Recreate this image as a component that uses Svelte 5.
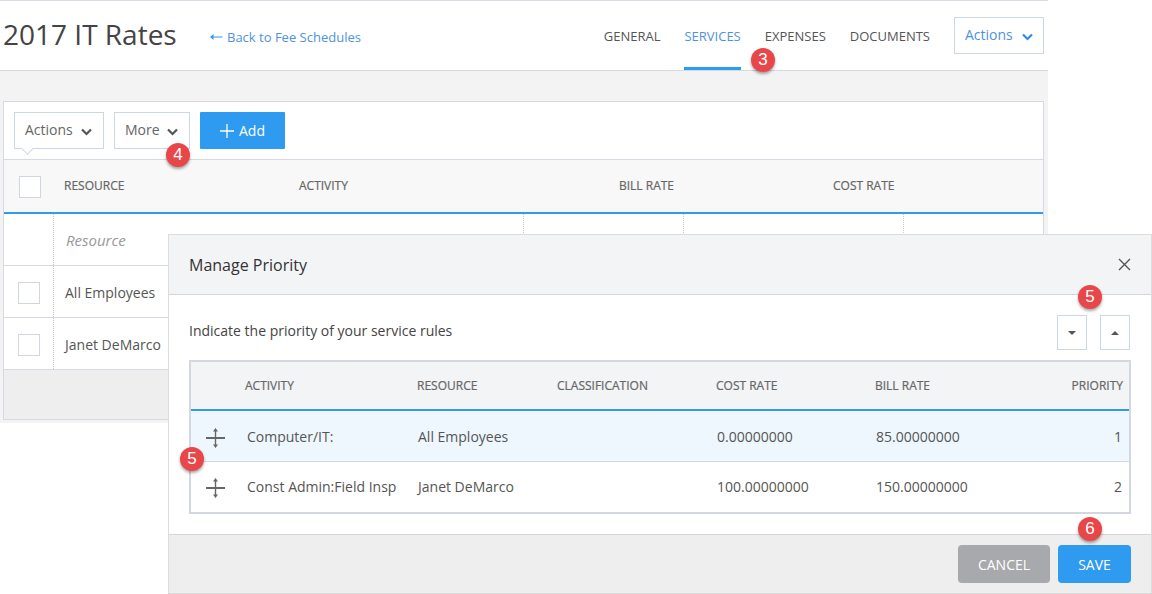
<script>
const baseRows = ['All Employees', 'Janet DeMarco']

const priorityRows = [
	{ activity: 'Computer/IT:', resource: 'All Employees', cost: '0.00000000', bill: '85.00000000', priority: 1, active: true },
	{ activity: 'Const Admin:Field Insp', resource: 'Janet DeMarco', cost: '100.00000000', bill: '150.00000000', priority: 2, active: false }
]
</script>

<div class="page">
	<div class="shell">
		<header class="top">
			<h1>2017 IT Rates</h1>
			<a class="back" href="#back">
				<svg width="13" height="8" viewBox="0 0 13 8"><path d="M0 4l3.500-3v2.400h9v1.200h-9V7z" fill="#2e9bf0"/></svg>
				Back to Fee Schedules
			</a>
			<nav class="tabs">
				<span>GENERAL</span>
				<span class="on">SERVICES</span>
				<span>EXPENSES</span>
				<span>DOCUMENTS</span>
			</nav>
			<button class="outline blue">Actions
				<svg class="chev" width="11" height="8" viewBox="0 0 11 8"><path d="M1 1.500l4.500 4.500 4.500-4.500" fill="none" stroke="currentColor" stroke-width="2.200"/></svg>
			</button>
		</header>

		<div class="content">
			<section class="panel">
				<div class="toolbar">
					<button class="outline act">Actions
						<svg class="chev" width="11" height="8" viewBox="0 0 11 8"><path d="M1 1.500l4.500 4.500 4.500-4.500" fill="none" stroke="currentColor" stroke-width="2.200"/></svg>
						<i class="tip"></i>
					</button>
					<button class="outline more">More
						<svg class="chev" width="11" height="8" viewBox="0 0 11 8"><path d="M1 1.500l4.500 4.500 4.500-4.500" fill="none" stroke="currentColor" stroke-width="2.200"/></svg>
					</button>
					<button class="add">
						<svg width="14" height="14" viewBox="0 0 14 14"><path d="M7 0v14M0 7h14" stroke="#fff" stroke-width="1.300"/></svg>
						Add
					</button>
				</div>

				<div class="row head">
					<div class="c-check"><span class="box"></span></div>
					<div>RESOURCE</div>
					<div>ACTIVITY</div>
					<div>BILL RATE</div>
					<div>COST RATE</div>
				</div>

				<div class="row body filter">
					<div class="c-check"></div>
					<div class="placeholder">Resource</div>
					<div></div>
					<div></div>
					<div></div>
				</div>

				{#each baseRows as name}
					<div class="row body">
						<div class="c-check"><span class="box"></span></div>
						<div>{name}</div>
						<div></div>
						<div></div>
						<div></div>
					</div>
				{/each}

				<div class="panel-foot"></div>
			</section>
		</div>
	</div>

	<section class="modal">
		<div class="modal-head">
			<h2>Manage Priority</h2>
			<svg width="13" height="13" viewBox="0 0 13 13"><path d="M1 1l11 11M12 1L1 12" stroke="#555" stroke-width="1.400" fill="none"/></svg>
		</div>

		<div class="modal-body">
			<div class="intro">
				<p>Indicate the priority of your service rules</p>
				<button class="sort" aria-label="Move down"><i class="down"></i></button>
				<button class="sort" aria-label="Move up"><i class="up"></i></button>
			</div>

			<div class="ptable">
				<div class="prow phead">
					<div></div>
					<div>ACTIVITY</div>
					<div>RESOURCE</div>
					<div>CLASSIFICATION</div>
					<div>COST RATE</div>
					<div>BILL RATE</div>
					<div class="right">PRIORITY</div>
				</div>
				{#each priorityRows as r}
					<div class="prow pbody" class:active={r.active}>
						<div class="grip">
							<svg width="19" height="20" viewBox="0 0 19 20">
								<path d="M0 10h19" stroke="#666" stroke-width="2" fill="none"/>
								<path d="M9.500 2v16" stroke="#666" stroke-width="1.400" fill="none"/>
								<path d="M9.500 0l2.500 3.500h-5zM9.500 20l2.500-3.500h-5z" fill="#666"/>
							</svg>
						</div>
						<div>{r.activity}</div>
						<div>{r.resource}</div>
						<div></div>
						<div>{r.cost}</div>
						<div>{r.bill}</div>
						<div class="right">{r.priority}</div>
					</div>
				{/each}
			</div>
		</div>

		<div class="modal-foot">
			<button class="cancel">CANCEL</button>
			<button class="save">SAVE</button>
		</div>
	</section>

	<span class="badge" style="left:751px;top:48px">3</span>
	<span class="badge" style="left:166px;top:143px">4</span>
	<span class="badge" style="left:1078px;top:285px">5</span>
	<span class="badge" style="left:180px;top:447px">5</span>
	<span class="badge" style="left:1078px;top:517px">6</span>
</div>

<style>
:global(body) {
	margin: 0;
	background: #fff;
}

.page {
	position: relative;
	width: 1152px;
	height: 594px;
	overflow: hidden;
	font-family: "Open Sans", sans-serif;
	font-size: 14px;
	color: #555;
}

.shell {
	width: 1048px;
}

button {
	font-family: inherit;
	cursor: pointer;
}

.top {
	display: flex;
	align-items: center;
	box-sizing: border-box;
	height: 71px;
	border-top: 1px solid #d8dde5;
	border-bottom: 1px solid #d5d9e2;
	padding-left: 3px;
	padding-right: 4px;
}

h1 {
	margin: -4px 0 0;
	font-size: 28px;
	font-weight: 400;
	color: #444;
	line-height: 1;
	width: 207px;
}

.back {
	display: flex;
	align-items: center;
	gap: 4px;
	padding-top: 2px;
	font-size: 13px;
	color: #4e92df;
	text-decoration: none;
}

.tabs {
	display: flex;
	gap: 24px;
	margin-left: auto;
	margin-right: 24px;
	align-self: stretch;
	font-size: 13px;
	color: #555;
}

.tabs span {
	display: flex;
	align-items: center;
	padding-top: 3px;
	box-sizing: border-box;
	height: 69px;
	border-bottom: 3px solid transparent;
}

.tabs .on {
	color: #4e92df;
	border-bottom-color: #2e9bf0;
}

.outline {
	display: flex;
	align-items: center;
	justify-content: space-between;
	height: 37px;
	padding: 0 11px 2px 10px;
	box-sizing: border-box;
	background: #fff;
	border: 1px solid #cbd8e2;
	font-size: 14px;
	color: #666;
	position: relative;
}

.outline.blue {
	width: 90px;
	height: 37px;
	padding-right: 10px;
	color: #4e92df;
}

.outline .chev {
	margin-top: 4px;
}

.blue .chev {
	color: #2e8fe0;
}

.act .chev, .more .chev {
	color: #555;
}

.content {
	background: #f3f3f3;
	height: 352px;
	padding: 30px 4px 0 3px;
	box-sizing: border-box;
}

.panel {
	border: 1px solid #d5d9e2;
	background: #fff;
}

.toolbar {
	display: flex;
	gap: 10px;
	height: 58px;
	padding: 10px 10px 0;
	box-sizing: border-box;
	border-bottom: 1px solid #d5d9e2;
}

.act {
	width: 90px;
}

.more {
	width: 76px;
}

.tip {
	position: absolute;
	left: 8px;
	bottom: -5px;
	width: 8px;
	height: 8px;
	background: #fff;
	border-right: 1px solid #cbd8e2;
	border-bottom: 1px solid #cbd8e2;
	transform: rotate(45deg);
}

.add {
	display: flex;
	align-items: center;
	justify-content: center;
	gap: 5px;
	width: 85px;
	height: 37px;
	background: #2e9bf0;
	color: #fff;
	border: 0;
	border-radius: 1px;
	font-size: 14px;
}

.row {
	display: grid;
}

.row > div {
	display: flex;
	align-items: center;
}

.head {
	height: 54px;
	background: #f8f8f8;
	border-bottom: 2px solid #2e9bf0;
	box-sizing: border-box;
	font-size: 12px;
	color: #666;
	-webkit-text-stroke: 0.2px #666;
	grid-template-columns: 60px 235px 320px 214px 1fr;
	padding-bottom: 1px;
}

.head > .c-check {
	padding: 3px 0 0 15px;
}

.body {
	height: 52px;
	box-sizing: border-box;
	border-bottom: 1px solid #d5d9e2;
	font-size: 14px;
	color: #555;
	grid-template-columns: 50px 470px 160px 220px 1fr;
}

.body > div {
	border-right: 1px dotted #c9c9c9;
	padding-left: 11px;
	padding-top: 1px;
}

.body > div:last-child {
	border-right: 0;
}

.body > .c-check {
	padding-left: 14px;
	padding-top: 3px;
}

.body > .placeholder {
	padding-left: 12px;
	font-size: 15px;
	font-style: italic;
	color: #999;
}

.box {
	display: block;
	width: 20px;
	height: 20px;
	border: 1px solid #cfd6e0;
	background: #fff;
}

.panel-foot {
	height: 49px;
	background: #eee;
}

.modal {
	position: absolute;
	left: 168px;
	top: 234px;
	width: 984px;
	height: 360px;
	box-sizing: border-box;
	display: flex;
	flex-direction: column;
	background: #fff;
	border: 1px solid #dcdcdc;
}

.modal-head {
	display: flex;
	align-items: center;
	justify-content: space-between;
	height: 60px;
	flex: none;
	box-sizing: border-box;
	padding: 0 20px;
	background: #f3f4f6;
	border-bottom: 1px solid #d5d5d5;
}

h2 {
	margin: 0;
	font-size: 16px;
	font-weight: 400;
	color: #333;
}

.modal-body {
	flex: 1;
	padding: 20px 20px 0 21px;
}

.intro {
	display: flex;
	align-items: center;
	gap: 13px;
	height: 35px;
	margin-bottom: 11px;
	padding-right: 1px;
}

.intro p {
	margin: 0 auto 0 -1px;
	padding-bottom: 5px;
	font-size: 14px;
	color: #444;
}

.sort {
	display: flex;
	align-items: center;
	justify-content: center;
	width: 30px;
	height: 35px;
	padding: 0;
	background: #fff;
	border: 1px solid #cbd8e2;
}

.down, .up {
	width: 0;
	height: 0;
	border-left: 4.500px solid transparent;
	border-right: 4.500px solid transparent;
}

.down {
	border-top: 4px solid #555;
}

.up {
	border-bottom: 4px solid #555;
}

.ptable {
	border: 2px solid #d3d7e0;
	margin-left: -1px;
	margin-top: -1px;
}

.prow {
	display: grid;
	grid-template-columns: 54px 172px 140px 159px 159px 1fr 70px;
	font-size: 14px;
}

.prow > div {
	display: flex;
	align-items: center;
}

.right {
	justify-content: flex-end;
	padding-right: 6px;
}

.phead {
	height: 49px;
	box-sizing: border-box;
	background: #f3f4f6;
	border-bottom: 2px solid #2e9bf0;
	font-size: 12px;
	color: #666;
	-webkit-text-stroke: 0.2px #666;
}

.pbody {
	height: 50px;
	box-sizing: border-box;
	color: #555;
	padding-left: 1px;
	grid-template-columns: 55px 171px 140px 159px 159px 1fr 70px;
}

.pbody + .pbody {
	border-top: 1px solid #d5d9e2;
	height: 51px;
	padding-bottom: 2px;
}

.pbody .right {
	padding-right: 7px;
}

.active {
	background: #eef7fe;
}

.prow > .grip {
	padding: 3px 0 0 14px;
}

.modal-foot {
	display: flex;
	justify-content: flex-end;
	gap: 8px;
	flex: none;
	height: 59px;
	box-sizing: border-box;
	padding: 10px 20px 0 0;
	background: #eee;
	border-top: 1px solid #d5d5d5;
}

.cancel, .save {
	height: 38px;
	border: 0;
	border-radius: 4px;
	font-size: 14px;
	color: #fff;
}

.cancel {
	width: 92px;
	background: #a7a9ac;
}

.save {
	width: 73px;
	background: #2e9bf0;
}

.badge {
	position: absolute;
	width: 24px;
	height: 24px;
	border-radius: 50%;
	background: #e8474a;
	box-shadow: 0 2px 3px rgba(0, 0, 0, 0.35);
	color: #fff;
	font-family: "Liberation Sans", sans-serif;
	font-size: 17px;
	line-height: 23px;
	text-align: center;
}
</style>
